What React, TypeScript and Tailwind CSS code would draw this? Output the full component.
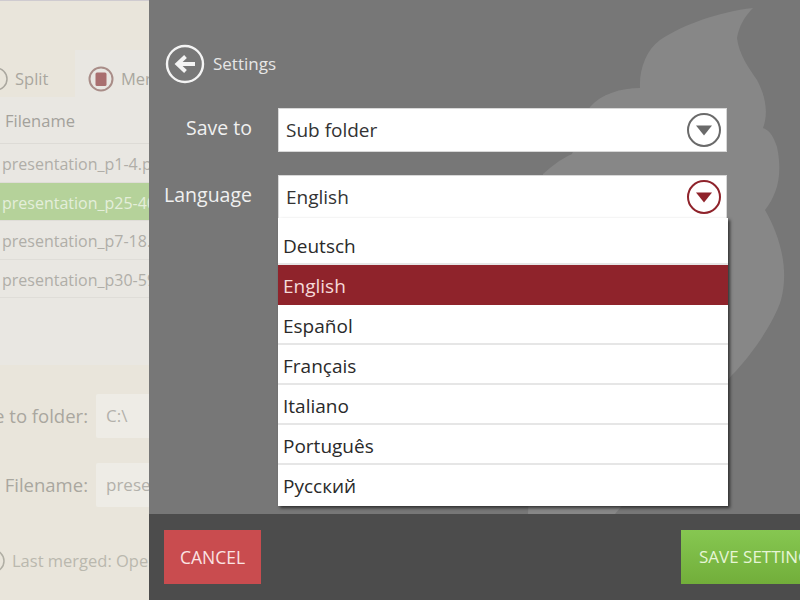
const FONT = "font-['Open_Sans','Noto_Sans',sans-serif]";

const LANGUAGES = ['Deutsch', 'English', 'Español', 'Français', 'Italiano', 'Português', 'Русский'];
const FILES = ['presentation_p1-4.pdf', 'presentation_p25-40.pdf', 'presentation_p7-18.pdf', 'presentation_p30-59.pdf'];

function ChevronCircle({ color }: { color: string }) {
  return (
    <svg width="36" height="36" viewBox="0 0 36 36" className="shrink-0">
      <circle cx="18" cy="18" r="16" fill="none" stroke={color} strokeWidth="2" />
      <path d="M10 13.5h16l-8 10z" fill={color} />
    </svg>
  );
}

function LeftPanel() {
  return (
    <div className="w-[149px] shrink-0 h-full overflow-hidden flex flex-col bg-[#e9e5db] text-[#a9a79f] whitespace-nowrap">
      <div className="h-[50px] shrink-0 border-t border-[#cfcbd0]" />
      <div className="h-[47px] shrink-0 flex">
        <div className="w-[75px] shrink-0 flex items-center gap-[7px] pt-[11px]">
          <svg width="24" height="24" viewBox="0 0 24 24" className="shrink-0 ml-[-16px]">
            <circle cx="12" cy="12" r="11" fill="none" stroke="#aaa79f" strokeWidth="1.5" />
          </svg>
          <span className="text-[16.5px]">Split</span>
        </div>
        <div className="flex-1 flex items-center gap-[7px] pl-[13px] pt-[11px] bg-[#e9e7e2]">
          <svg width="26" height="26" viewBox="0 0 26 26" className="shrink-0">
            <circle cx="13" cy="13" r="11.5" fill="none" stroke="#a98d88" strokeWidth="2" />
            <rect x="7.5" y="6.5" width="11" height="13.5" rx="1.5" fill="#a96f6f" />
          </svg>
          <span className="text-[16.5px]">Merge</span>
        </div>
      </div>
      <div className="h-[268px] shrink-0 bg-[#e9e7e2]">
        <div className="h-[47px] flex items-center pl-[5px] pt-[2px] text-[16.5px] text-[#a3a19b] border-b border-[#dddbd6]">Filename</div>
        {FILES.map((name, i) => (
          <div
            key={name}
            className={`h-[38.5px] flex items-center pl-[2px] pt-[3px] text-[16px] border-b border-[#dfddd8] ${i === 1 ? 'bg-[#b5d29a] text-[#e4eeda]' : 'text-[#b0aea8]'}`}
          >
            {name}
          </div>
        ))}
      </div>
      <div className="flex-1 flex flex-col pt-[29px]">
        <div className="flex items-center h-[44px] gap-[8px]">
          <span className="w-[88px] shrink-0 flex justify-end overflow-hidden text-[18.5px]">Save to folder:</span>
          <div className="flex-1 h-full bg-[#eeece6] rounded-l-[2px] pl-[10px] flex items-center text-[17px] text-[#b3b1ab]">C:\</div>
        </div>
        <div className="flex items-center h-[44px] gap-[8px] mt-[25px]">
          <span className="w-[88px] shrink-0 flex justify-end overflow-hidden text-[18.5px]">Filename:</span>
          <div className="flex-1 h-full bg-[#eeece6] rounded-l-[2px] pl-[10px] flex items-center text-[17px] text-[#b3b1ab] overflow-hidden">presentation</div>
        </div>
        <div className="flex items-center gap-[7px] mt-[42px] text-[16.5px] text-[#bab8ae]">
          <svg width="24" height="24" viewBox="0 0 24 24" className="shrink-0 ml-[-19px]">
            <circle cx="12" cy="12" r="11" fill="none" stroke="#b0aea4" strokeWidth="1.5" />
          </svg>
          <span>Last merged: Open</span>
        </div>
      </div>
    </div>
  );
}

export default function App() {
  return (
    <div className={`w-[800px] h-[600px] flex overflow-hidden ${FONT}`}>
      <LeftPanel />
      <div className="flex-1 min-w-0 flex flex-col">
        <div className="relative h-[514px] shrink-0 bg-[#777777] overflow-hidden">
          {/* watermark, coordinates are relative to the panel */}
          <svg width="651" height="514" viewBox="0 0 651 514" className="absolute inset-0">
            <path
              d="M604 8C570 12 535 24 511 40C497 50 490 70 491 88C472 88 452 94 441 107L423 154C410 160 402 167 394 174L379 514H466L583 375C600 358 624 325 632 300C640 270 632 238 616 210C628 195 634 175 628 147C624 135 620 130 614 128C620 112 616 95 608 80C600 68 590 55 588 38C590 26 596 16 604 8Z"
              fill="#878787"
            />
          </svg>
          <div className="relative pl-[16px] pt-[44px] flex items-center gap-[8px] text-[#e6e6e6]">
            <svg width="40" height="40" viewBox="0 0 40 40" className="shrink-0">
              <circle cx="20" cy="20" r="18" fill="none" stroke="#f4f4f4" strokeWidth="2.4" />
              <path d="M30 20H14M20.5 12.5L12.5 20l8 7.5" fill="none" stroke="#f4f4f4" strokeWidth="4" />
            </svg>
            <span className="text-[17px]">Settings</span>
          </div>
          <div className="relative flex items-center mt-[24px] h-[44px]">
            <span className="w-[103px] pb-[4px] text-right text-[19.5px] text-[#f0f0f0]">Save to</span>
            <div className="ml-[26px] w-[449px] h-full bg-white border border-[#d8d8d8] flex items-center justify-between pl-[7px] pr-[4px] text-[19px] text-[#333]">
              Sub folder
              <ChevronCircle color="#6a6a6a" />
            </div>
          </div>
          <div className="relative flex items-start mt-[23px]">
            <span className="w-[103px] h-[44px] pb-[4px] flex items-center justify-end text-[19.5px] text-[#f0f0f0]">Language</span>
            <div className="relative ml-[26px] w-[449px] h-[44px] bg-white border border-[#d8d8d8] flex items-center justify-between pl-[7px] pr-[4px] text-[19px] text-[#333]">
              English
              <ChevronCircle color="#8f232b" />
              <div className="absolute left-[-1px] top-[42px] w-[450px] h-[288px] bg-white pt-[7px] shadow-[2px_2px_3px_rgba(30,30,30,0.8)]">
                {LANGUAGES.map((lang) => (
                  <div
                    key={lang}
                    className={`h-[40px] flex items-center pl-[5px] pt-[4px] last:pt-[2px] text-[19px] border-b-2 last:border-b-0 ${lang === 'English' ? 'bg-[#8f232b] border-[#8f232b] text-[#f5dada]' : 'text-[#2a2a2a] border-[#e6e6e6]'}`}
                  >
                    {lang}
                  </div>
                ))}
              </div>
            </div>
          </div>
        </div>
        <div className="flex-1 bg-[#4c4c4c] flex items-start justify-between pt-[16px] pl-[15px] overflow-hidden">
          <button className="w-[97px] h-[54px] bg-[#c94c4f] text-[#fbe3e3] text-[17.5px] shrink-0">CANCEL</button>
          <button className="w-[170px] mr-[-51px] h-[54px] bg-gradient-to-b from-[#86c751] to-[#72ae3a] text-[#e6f5d5] text-[17px] text-left pl-[18px] shrink-0 whitespace-nowrap">SAVE SETTINGS</button>
        </div>
      </div>
    </div>
  );
}
